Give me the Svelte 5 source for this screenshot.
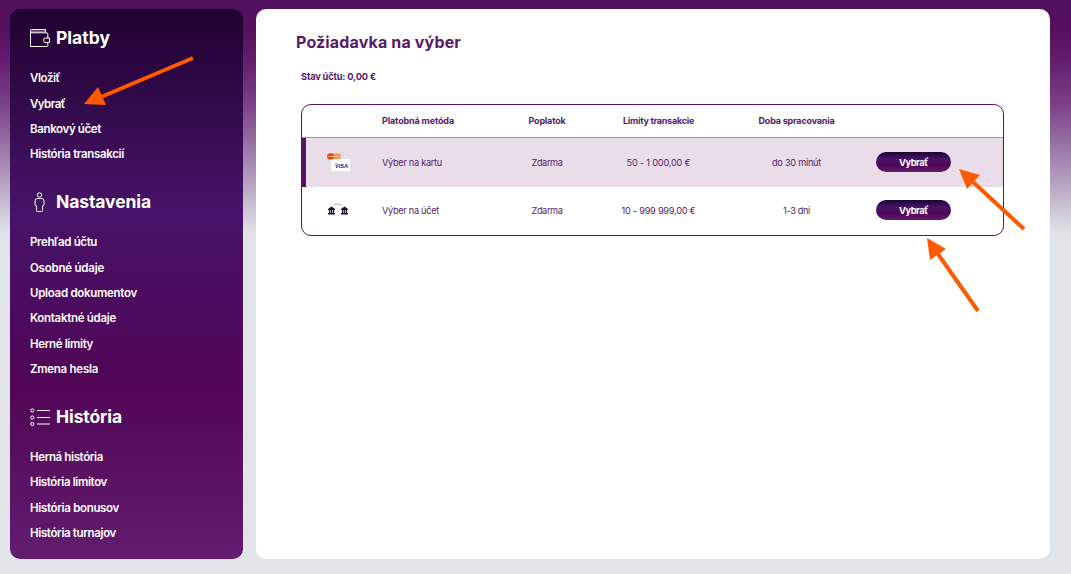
<script lang="ts">
  type Icon = 'wallet' | 'person' | 'list';
  type Item = { label: string; width: number };

  const sections: { title: string; icon: Icon; width: number; items: Item[] }[] = [
    {
      title: 'Platby',
      icon: 'wallet',
      width: 54,
      items: [
        { label: 'Vložiť', width: 30 },
        { label: 'Vybrať', width: 35 },
        { label: 'Bankový účet', width: 71 },
        { label: 'História transakcií', width: 94 },
      ],
    },
    {
      title: 'Nastavenia',
      icon: 'person',
      width: 95,
      items: [
        { label: 'Prehľad účtu', width: 67 },
        { label: 'Osobné údaje', width: 74 },
        { label: 'Upload dokumentov', width: 107 },
        { label: 'Kontaktné údaje', width: 86 },
        { label: 'Herné limity', width: 63 },
        { label: 'Zmena hesla', width: 68 },
      ],
    },
    {
      title: 'História',
      icon: 'list',
      width: 66,
      items: [
        { label: 'Herná história', width: 73 },
        { label: 'História limitov', width: 77 },
        { label: 'História bonusov', width: 89 },
        { label: 'História turnajov', width: 86 },
      ],
    },
  ];

  const columns: Item[] = [
    { label: 'Platobná metóda', width: 72 },
    { label: 'Poplatok', width: 37 },
    { label: 'Limity transakcie', width: 71 },
    { label: 'Doba spracovania', width: 76 },
  ];

  const methods: { kind: 'card' | 'bank'; cells: Item[] }[] = [
    {
      kind: 'card',
      cells: [
        { label: 'Výber na kartu', width: 60 },
        { label: 'Zdarma', width: 31 },
        { label: '50 - 1 000,00 €', width: 64 },
        { label: 'do 30 minút', width: 49 },
      ],
    },
    {
      kind: 'bank',
      cells: [
        { label: 'Výber na účet', width: 57 },
        { label: 'Zdarma', width: 31 },
        { label: '10 - 999 999,00 €', width: 74 },
        { label: '1-3 dni', width: 27 },
      ],
    },
  ];

  // spreads the letters so that the label takes the given width
  function fit(node: HTMLElement, width: number) {
    node.style.letterSpacing = '0';
    const natural = node.getBoundingClientRect().width;
    const spacing = (width - natural) / (node.textContent ?? '').length;
    node.style.letterSpacing = `${spacing}px`;
  }
</script>

<div class="page">
  <aside class="sidebar">
    {#each sections as section}
      <section>
        <h2>
          {#if section.icon === 'wallet'}
            <svg width="20" height="20" viewBox="0 0 20 20">
              <path class="faint" d="M1 3.5h15" />
              <path d="M.5 3v15.5h16.3q1 0 1-1V14M17.8 10.5V5.8q0-1-1-1H2Q.5 4.8.5 3v-.7q0-.8.8-.8h14.2v3" />
              <path d="M19.5 10h-4.9l-1.2 2.2 1.2 2.2h4.9z" />
            </svg>
          {:else if section.icon === 'person'}
            <svg width="20" height="20" viewBox="0 0 20 20">
              <circle cx="9.5" cy="3" r="2.2" />
              <path d="M7.5 6.5h4q2.5 0 2.5 2.5v4q0 .8-1.5.8v4.7q0 1-1 1h-4q-1 0-1-1v-4.7Q5 13.8 5 13V9q0-2.500 2.500-2.500z" />
            </svg>
          {:else}
            <svg width="20" height="20" viewBox="0 0 20 20">
              {#each [3.5, 10.5, 17] as y}
                <circle cx="2.3" cy={y} r="1.6" />
                <path d="M7 {y}h13" />
              {/each}
            </svg>
          {/if}
          <span use:fit={section.width}>{section.title}</span>
        </h2>
        <ul>
          {#each section.items as item}
            <li><span use:fit={item.width}>{item.label}</span></li>
          {/each}
        </ul>
      </section>
    {/each}
  </aside>

  <main>
    <h1><span use:fit={165}>Požiadavka na výber</span></h1>
    <p class="balance"><span use:fit={75}>Stav účtu: 0,00 €</span></p>

    <div class="table">
      <div class="row head">
        <div></div>
        {#each columns as column}
          <div class="cell"><span use:fit={column.width}>{column.label}</span></div>
        {/each}
      </div>
      {#each methods as method, i}
        <div class="row" class:selected={i === 0}>
          <div class="logo">
            {#if method.kind === 'card'}
              <svg width="28" height="22" viewBox="0 0 28 22">
                <rect x="0" y="1" width="19" height="12" rx="1.5" fill="#e2dfe3" />
                <ellipse cx="6" cy="5.5" rx="3.8" ry="3.2" fill="#e8450c" />
                <ellipse cx="12" cy="5.5" rx="3.8" ry="3.2" fill="#fa9a52" />
                <path d="M3.5 5.5h10" stroke="#f8b187" stroke-width="1" />
                <rect x="6" y="8" width="19" height="12" rx="1" fill="#fff" />
                <text x="10" y="16.6" textLength="13" lengthAdjust="spacingAndGlyphs">VISA</text>
                <path d="M10 12l2 .1.8 2z" fill="#f09a30" />
              </svg>
            {:else}
              <svg width="28" height="22" viewBox="0 0 28 22">
                {#each [3, 16] as x}
                  <g transform="translate({x} 7)" fill="#21102e">
                    <path d="M0 3L3.5.6 7 3v.9H0zM1 4h1.3v3H1zM2.9 4h1.2v3H2.9zM4.8 4h1.3v3H4.8zM0 7h7v1.5H0z" />
                  </g>
                {/each}
                <path d="M9 5.8q4-1.8 8 .2" fill="none" stroke="#b9b5be" stroke-width="1" />
              </svg>
            {/if}
          </div>
          {#each method.cells as cell}
            <div class="cell"><span use:fit={cell.width}>{cell.label}</span></div>
          {/each}
          <div><button><span use:fit={29}>Vybrať</span></button></div>
        </div>
      {/each}
    </div>
  </main>

  <svg class="arrows" width="1071" height="574" viewBox="0 0 1071 574">
    <path d="M193 58L101 97M1024 229L973 182M978 311L938 254" />
    <polygon points="84,104 98,87 106,105" />
    <polygon points="959,169 980,175 967,189" />
    <polygon points="927,238 946,249 930,260" />
  </svg>
</div>

<style>
  :global(body) {
    margin: 0;
  }
  .page {
    position: relative;
    box-sizing: border-box;
    display: flex;
    gap: 13px;
    width: 1071px;
    height: 574px;
    padding: 9px 21px 15px 10px;
    font-family: Inter, 'Noto Sans', sans-serif;
    background: linear-gradient(
      #531260 0,
      #560d5e 28px,
      #662071 65px,
      #7c4288 105px,
      #a78bb3 165px,
      #c9bfd1 205px,
      #e1e5ea 234px
    );
  }
  span {
    display: inline-block;
    white-space: pre;
  }
  .sidebar {
    box-sizing: border-box;
    flex: none;
    display: flex;
    flex-direction: column;
    gap: 19.2px;
    width: 233px;
    padding: 14px 20px 0;
    border-radius: 10px;
    color: #fff;
    background: linear-gradient(#200131, #471368 37%, #510556 68%, #621d6e);
  }
  h2 {
    display: flex;
    align-items: center;
    gap: 6px;
    height: 30px;
    margin: 0 0 13.4px;
    font-size: 17.5px;
    font-weight: 700;
    line-height: 30px;
  }
  h2 svg {
    fill: none;
    stroke: #fff;
    stroke-width: 1;
  }
  h2 svg .faint {
    stroke: #85728f;
    stroke-width: 2;
  }
  ul {
    margin: 0;
    padding: 0;
    list-style: none;
  }
  li {
    height: 25.35px;
    font-size: 11.5px;
    font-weight: 600;
    line-height: 25.35px;
  }
  main {
    box-sizing: border-box;
    flex: 1;
    padding: 20px 46px 0 40px;
    border-radius: 10px;
    background: #fff;
    color: #581a68;
  }
  h1 {
    margin: 0;
    font-size: 16px;
    font-weight: 700;
    line-height: 26px;
  }
  .balance {
    margin: 12px 0 18px 5px;
    font-size: 9.3px;
    font-weight: 700;
    line-height: 19px;
  }
  .table {
    box-sizing: border-box;
    height: 132px;
    margin-left: 5px;
    border: 1px solid #581367;
    border-radius: 10px;
    overflow: hidden;
  }
  .row {
    box-sizing: border-box;
    display: grid;
    grid-template-columns: 80px 112px 106px 117px 159px 1fr;
    align-items: center;
    height: 49px;
    padding-bottom: 1px;
    font-size: 9.2px;
    font-weight: 400;
  }
  .row:last-child {
    height: 48px;
    padding-bottom: 2px;
  }
  .head {
    height: 33px;
    border-bottom: 1px solid #ae8bb9;
    font-size: 9px;
    font-weight: 700;
  }
  .selected {
    background: #e8dde9;
    box-shadow: inset 4px 0 #581367;
  }
  .cell {
    text-align: center;
  }
  .cell:nth-child(2) {
    text-align: left;
  }
  .logo {
    display: flex;
    padding-left: 23px;
  }
  .logo text {
    font: italic 700 6px 'Liberation Sans', sans-serif;
    fill: #29186c;
  }
  button {
    display: block;
    width: 75px;
    height: 20px;
    padding: 0;
    border: 0;
    border-radius: 10px;
    background: linear-gradient(#200131, #471368 37%, #510556 68%, #621d6e);
    color: #fff;
    font: 700 9.3px Inter, 'Noto Sans', sans-serif;
  }
  .arrows {
    position: absolute;
    inset: 0;
    pointer-events: none;
    fill: #ff5a00;
  }
  .arrows path {
    fill: none;
    stroke: #ff5a00;
    stroke-width: 4;
  }
</style>
